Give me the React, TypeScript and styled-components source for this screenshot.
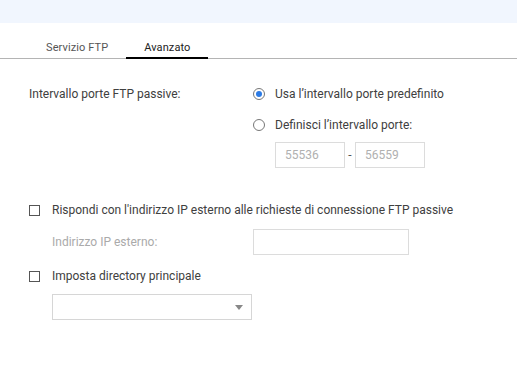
import styled, { createGlobalStyle } from 'styled-components';

const GlobalStyle = createGlobalStyle`
  body {
    margin: 0;
    background: #fff;
    font-family: Roboto, "Liberation Sans", sans-serif;
    font-size: 12px;
    color: #404040;
  }
`;

const App = (): JSX.Element => (
  <Page>
    <GlobalStyle />
    <Header />
    <TabBar>
      <Tab>Servizio FTP</Tab>
      <Tab active>Avanzato</Tab>
    </TabBar>
    <Content>
      <Row>
        <LabelCol>Intervallo porte FTP passive:</LabelCol>
        <Options>
          <Option>
            <Radio checked />
            Usa l’intervallo porte predefinito
          </Option>
          <Option>
            <Radio />
            Definisci l’intervallo porte:
          </Option>
          <Range>
            <Field value="55536" width={70} readOnly />
            <Dash>-</Dash>
            <Field value="56559" width={70} readOnly />
          </Range>
        </Options>
      </Row>
      <CheckRow gap={34}>
        <Checkbox />
        Rispondi con l'indirizzo IP esterno alle richieste di connessione FTP passive
      </CheckRow>
      <SubRow>
        <SubLabel>Indirizzo IP esterno:</SubLabel>
        <Field width={156} />
      </SubRow>
      <CheckRow gap={13}>
        <Checkbox />
        Imposta directory principale
      </CheckRow>
      <Select>
        <Caret />
      </Select>
    </Content>
  </Page>
);

export default App;

const Page = styled.div`
  width: 517px;
  height: 368px;
  background: #fff;
`;

const Header = styled.div`
  height: 23px;
  background: #f1f6fe;
`;

const TabBar = styled.div`
  display: flex;
  margin-top: 18px;
  padding-left: 28px;
  border-bottom: 1px solid #b4b4b4;
`;

const Tab = styled.div<{ active?: boolean }>`
  padding: 0 18px;
  height: 16px;
  line-height: 14px;
  margin-bottom: -1px;
  color: ${(p) => (p.active ? '#222' : '#555')};
  border-bottom: 2px solid ${(p) => (p.active ? '#000' : 'transparent')};
  font-size: 11px;
  letter-spacing: 0.1px;
`;

const Content = styled.div`
  padding: 27px 0 0 29px;
`;

const Row = styled.div`
  display: flex;
`;

const LabelCol = styled.div`
  width: 224px;
  line-height: 16px;
`;

const Options = styled.div`
  display: flex;
  flex-direction: column;
`;

const Option = styled.div`
  display: flex;
  align-items: center;
  gap: 10px;
  height: 16px;
  margin-bottom: 15px;
  &:nth-child(2) {
    margin-bottom: 14px;
  }
`;

const Radio = styled.span<{ checked?: boolean }>`
  box-sizing: border-box;
  width: 12px;
  height: 12px;
  border-radius: 50%;
  border: 1px solid #777;
  display: flex;
  align-items: center;
  justify-content: center;
  &::after {
    content: '';
    width: 6px;
    height: 6px;
    border-radius: 50%;
    background: ${(p) => (p.checked ? '#2c7be5' : 'transparent')};
  }
`;

const Range = styled.div`
  display: flex;
  align-items: center;
  margin-top: -5px;
  padding-left: 22px;
`;

const Field = styled.input<{ width: number }>`
  box-sizing: border-box;
  width: ${(p) => p.width}px;
  height: 26px;
  border: 1px solid #dcdcdc;
  padding: 0 9px;
  font-family: inherit;
  font-size: 12px;
  color: #b0b0b0;
  outline: 0;
`;

const Dash = styled.span`
  width: 10px;
  text-align: center;
  color: #555;
`;

const CheckRow = styled.div<{ gap: number }>`
  display: flex;
  align-items: center;
  gap: 12px;
  height: 16px;
  margin-top: ${(p) => p.gap}px;
`;

const Checkbox = styled.span`
  box-sizing: border-box;
  width: 11px;
  height: 11px;
  border: 1px solid #555;
`;

const SubRow = styled.div`
  display: flex;
  align-items: center;
  margin-top: 11px;
  padding-left: 23px;
`;

const SubLabel = styled.div`
  width: 201px;
  color: #aaa;
`;

const Select = styled.div`
  box-sizing: border-box;
  width: 200px;
  height: 26px;
  margin: 10px 0 0 23px;
  border: 1px solid #d6d6d6;
  display: flex;
  align-items: center;
  justify-content: flex-end;
  padding-right: 8px;
`;

const Caret = styled.span`
  width: 0;
  height: 0;
  border-left: 4px solid transparent;
  border-right: 4px solid transparent;
  border-top: 5px solid #888;
`;
